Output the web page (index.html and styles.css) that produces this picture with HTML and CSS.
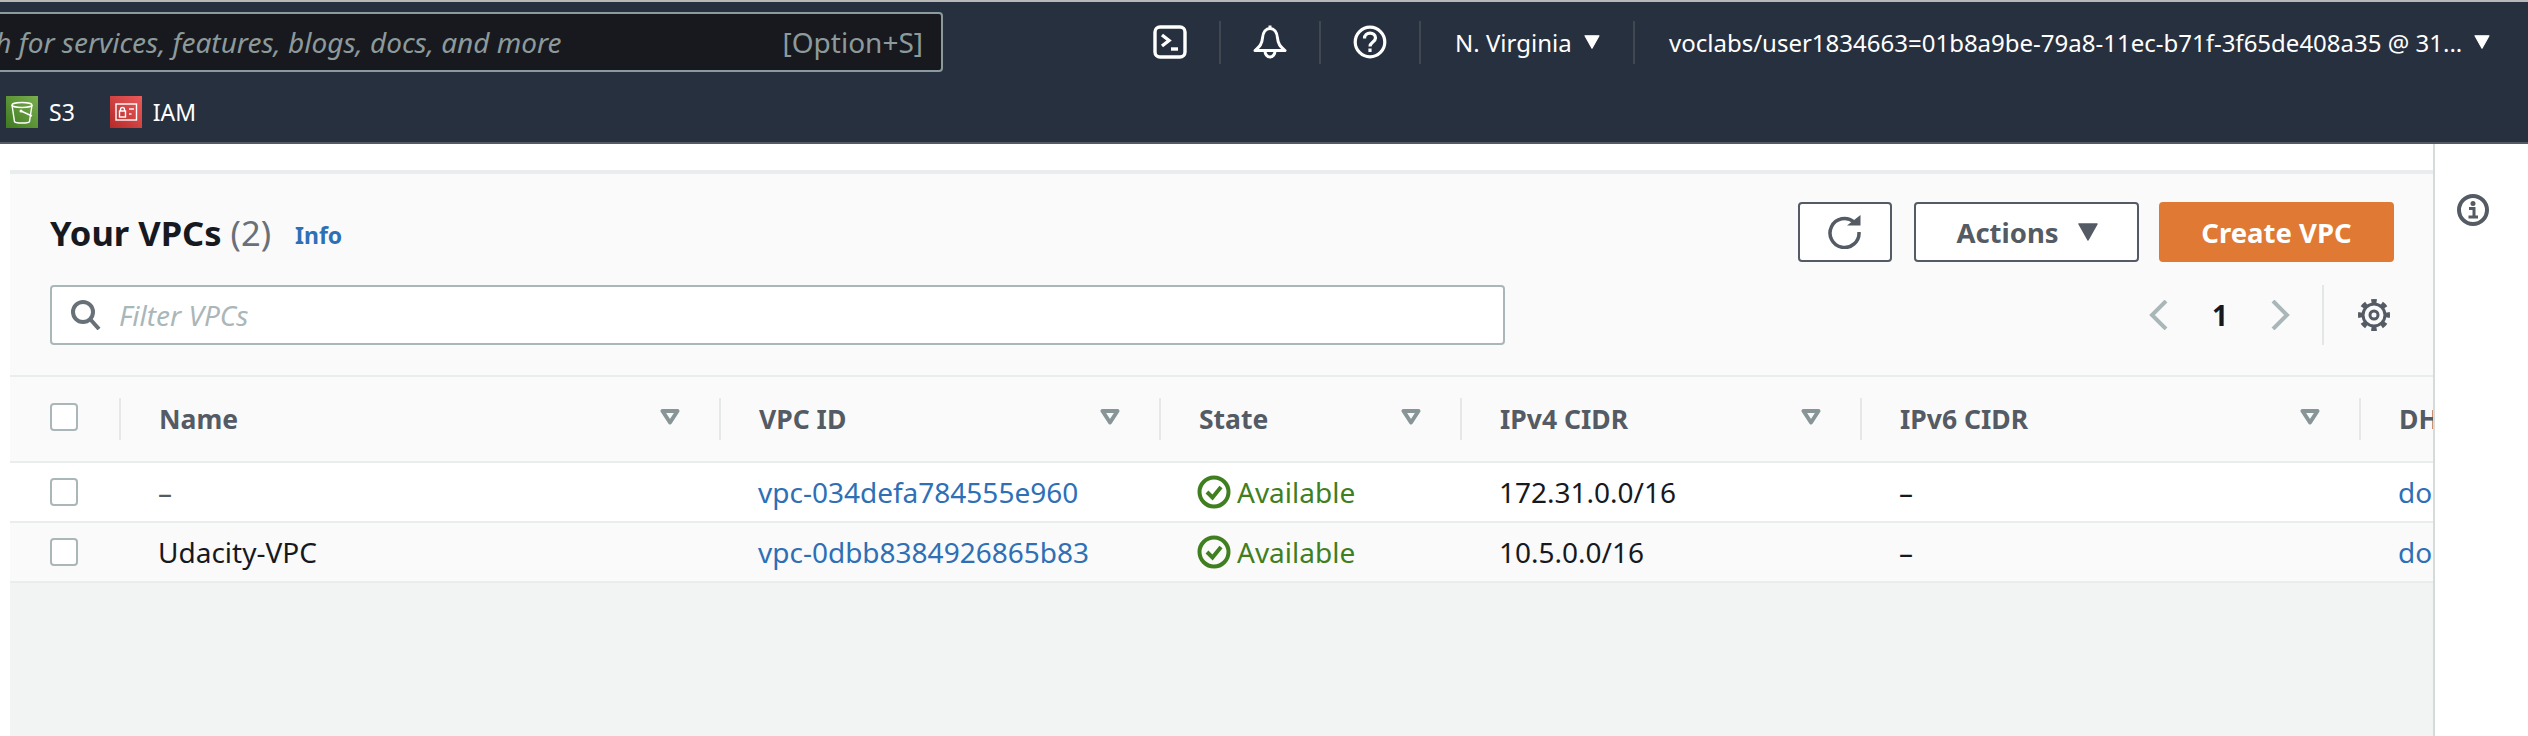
FILE: index.html
```html
<!DOCTYPE html>
<html lang="en">
<head>
    <meta charset="UTF-8">
    <meta name="viewport" content="width=device-width, initial-scale=1.0">
    <title>VPC Management Console</title>
    <link rel="stylesheet" href="styles.css">
</head>
<body>

    <svg class="defs" width="0" height="0">
        <symbol id="filterIcon" viewBox="0 0 20 16">
            <polygon points="2.500,2 17.500,2 10,13.500" fill="none" stroke="#879596" stroke-width="4" stroke-linejoin="round"/>
        </symbol>
        <symbol id="statusOk" viewBox="0 0 34 34">
            <circle cx="17" cy="17" r="14.500" fill="none" stroke="#3f7f1f" stroke-width="4"/>
            <polyline points="10,17 15.500,22.500 24,12" fill="none" stroke="#3f7f1f" stroke-width="4"/>
        </symbol>
        <symbol id="caret" viewBox="0 0 20 18">
            <polygon points="1,1 19,1 10,17" fill="currentColor" stroke="currentColor" stroke-width="1.500" stroke-linejoin="round"/>
        </symbol>
    </svg>

    <header class="topnav">
        <div class="nav-main">
            <div class="nav-search">
                <span class="nav-search-text">Search for services, features, blogs, docs, and more</span>
                <span class="nav-search-key">[Option+S]</span>
            </div>
            <div class="nav-tools">
                <div class="nav-tool">
                    <svg width="34" height="34" viewBox="0 0 34 34" fill="none" stroke="#fff" stroke-width="3.400">
                        <rect x="2" y="2" width="30" height="30" rx="5"/>
                        <polyline points="9,10 16,15.500 9,21"/>
                        <line x1="18" y1="24" x2="25" y2="24"/>
                    </svg>
                </div>
                <div class="nav-tool">
                    <svg width="34" height="34" viewBox="0 0 34 34" fill="none" stroke="#fff" stroke-width="3" stroke-linejoin="round">
                        <path d="M2 25.500 C7 21 9 19 9.500 13 C10 7 13 3.500 17 3.500 C21 3.500 24 7 24.500 13 C25 19 27 21 32 25.500 Z"/>
                        <path d="M12 26 a5 6 0 0 0 10 0"/>
                        <line x1="17" y1="0.500" x2="17" y2="4"/>
                    </svg>
                </div>
                <div class="nav-tool">
                    <svg width="34" height="34" viewBox="0 0 34 34" fill="none" stroke="#fff" stroke-width="3.200">
                        <circle cx="17" cy="17" r="14.800"/>
                        <path d="M11.500 13.500 C11.500 6.500 22.500 6.500 22.500 13 C22.500 17 17 17 17 21.500"/>
                        <line x1="17" y1="23.500" x2="17" y2="27"/>
                    </svg>
                </div>
                <div class="nav-menu">
                    <span>N. Virginia</span>
                    <svg class="nav-caret" width="16" height="14"><use href="#caret"/></svg>
                </div>
                <div class="nav-menu nav-account">
                    <span>voclabs/user1834663=01b8a9be-79a8-11ec-b71f-3f65de408a35 @ 31...</span>
                    <svg class="nav-caret" width="16" height="14"><use href="#caret"/></svg>
                </div>
            </div>
        </div>
        <div class="nav-favorites">
            <div class="fav">
                <svg class="fav-icon" width="32" height="32" viewBox="0 0 32 32">
                    <defs>
                        <linearGradient id="s3Bg" x1="0" y1="1" x2="1" y2="0">
                            <stop offset="0" stop-color="#3f7a20"/>
                            <stop offset="1" stop-color="#7aae4e"/>
                        </linearGradient>
                    </defs>
                    <rect width="32" height="32" fill="url(#s3Bg)"/>
                    <g fill="none" stroke="#fff" stroke-width="1.400">
                        <ellipse cx="16" cy="9" rx="10" ry="2.500"/>
                        <path d="M6 9 L8.500 25.500 C9 27.500 23 27.500 23.500 25.500 L26 9"/>
                        <path d="M15 15 L26 20"/>
                    </g>
                    <circle cx="15" cy="15" r="1.500" fill="#fff"/>
                </svg>
                <span>S3</span>
            </div>
            <div class="fav">
                <svg class="fav-icon" width="32" height="32" viewBox="0 0 32 32">
                    <defs>
                        <linearGradient id="iamBg" x1="0" y1="1" x2="1" y2="0">
                            <stop offset="0" stop-color="#b52a2a"/>
                            <stop offset="1" stop-color="#ec5a5a"/>
                        </linearGradient>
                    </defs>
                    <rect width="32" height="32" fill="url(#iamBg)"/>
                    <g fill="none" stroke="#fff" stroke-width="1.400">
                        <rect x="6" y="8" width="20.500" height="16"/>
                        <rect x="9.500" y="15" width="6" height="6"/>
                        <path d="M10.500 15 v-1.500 a2 2 0 0 1 4 0 v1.500"/>
                        <line x1="19" y1="13" x2="24" y2="13"/>
                        <line x1="19" y1="18" x2="21.500" y2="18"/>
                    </g>
                </svg>
                <span>IAM</span>
            </div>
        </div>
    </header>

    <main class="content">
        <section class="panel">
            <div class="panel-head">
                <div class="head-row">
                    <h1 class="title">Your VPCs <span class="count">(2)</span></h1>
                    <a class="info-link">Info</a>
                    <div class="actions">
                        <button class="btn btn-icon">
                            <svg width="36" height="34" viewBox="0 0 36 34" fill="none" stroke="#545b64" stroke-width="3.500">
                                <path d="M27 7 A14.500 14.500 0 1 0 32 17"/>
                                <path d="M20 10.500 H33.500 V0 Z" fill="#545b64" stroke="none"/>
                            </svg>
                        </button>
                        <button class="btn btn-actions">
                            Actions
                            <svg width="20" height="18"><use href="#caret"/></svg>
                        </button>
                        <button class="btn btn-primary">Create VPC</button>
                    </div>
                </div>
                <div class="head-row filter-row">
                    <div class="filter">
                        <svg width="30" height="30" viewBox="0 0 30 30" fill="none" stroke="#687078" stroke-width="4">
                            <circle cx="12" cy="12" r="10"/>
                            <line x1="19" y1="19" x2="28" y2="29"/>
                        </svg>
                        <span>Filter VPCs</span>
                    </div>
                    <div class="pager">
                        <svg width="19" height="30" viewBox="0 0 19 30" fill="none" stroke="#aab7b8" stroke-width="4"><polyline points="17,1 3,15 17,29"/></svg>
                        <span class="page-num">1</span>
                        <svg width="19" height="30" viewBox="0 0 19 30" fill="none" stroke="#aab7b8" stroke-width="4"><polyline points="2,1 16,15 2,29"/></svg>
                        <div class="pager-sep"></div>
                        <svg class="gear" width="32" height="32" viewBox="0 0 32 32" fill="none" stroke="#545b64">
                            <circle cx="16" cy="16" r="11" stroke-width="3"/>
                            <circle cx="16" cy="16" r="13.500" stroke-width="5" pathLength="80" stroke-dasharray="5 5" stroke-dashoffset="2.500"/>
                            <circle cx="16" cy="16" r="4" stroke-width="3"/>
                        </svg>
                    </div>
                </div>
            </div>

            <div class="table-row table-head">
                <div class="cell-check"><span class="checkbox"></span></div>
                <div class="th"><span>Name</span><svg width="20" height="16"><use href="#filterIcon"/></svg></div>
                <div class="th"><span>VPC ID</span><svg width="20" height="16"><use href="#filterIcon"/></svg></div>
                <div class="th"><span>State</span><svg width="20" height="16"><use href="#filterIcon"/></svg></div>
                <div class="th"><span>IPv4 CIDR</span><svg width="20" height="16"><use href="#filterIcon"/></svg></div>
                <div class="th"><span>IPv6 CIDR</span><svg width="20" height="16"><use href="#filterIcon"/></svg></div>
                <div class="th"><span>DHCP</span></div>
            </div>
            <div class="table-row row-white">
                <div class="cell-check"><span class="checkbox"></span></div>
                <div class="td muted">–</div>
                <div class="td"><a>vpc-034defa784555e960</a></div>
                <div class="td status"><svg width="34" height="34"><use href="#statusOk"/></svg>Available</div>
                <div class="td">172.31.0.0/16</div>
                <div class="td">–</div>
                <div class="td"><a>dopt-0a1b</a></div>
            </div>
            <div class="table-row">
                <div class="cell-check"><span class="checkbox"></span></div>
                <div class="td">Udacity-VPC</div>
                <div class="td"><a>vpc-0dbb8384926865b83</a></div>
                <div class="td status"><svg width="34" height="34"><use href="#statusOk"/></svg>Available</div>
                <div class="td">10.5.0.0/16</div>
                <div class="td">–</div>
                <div class="td"><a>dopt-0a1b</a></div>
            </div>
        </section>

        <aside class="side">
            <svg width="32" height="32" viewBox="0 0 32 32" fill="none" stroke="#545b64" stroke-width="4">
                <circle cx="16" cy="16" r="14"/>
                <circle cx="16" cy="9.500" r="2.500" fill="#545b64" stroke="none"/>
                <path d="M12 14.500 h5 v8 M11.500 23 h9.500" stroke-width="3"/>
            </svg>
        </aside>
    </main>

</body>
</html>
```

FILE: styles.css
```css
* {
    box-sizing: border-box;
}

html, body {
    height: 100%;
}

body {
    margin: 0;
    display: flex;
    flex-direction: column;
    overflow: hidden;
    font-family: "Noto Sans", sans-serif;
    font-size: 28px;
    color: #16191f;
    background-color: #fff;
}

.defs {
    position: absolute;
}

/* top nav */
.topnav {
    height: 144px;
    flex-shrink: 0;
    background-color: #27303f;
    border-top: 2px solid #b8b8b8;
    border-bottom: 2px solid #545b64;
    padding-top: 10px;
    color: #fff;
    overflow: hidden;
}

.nav-main {
    display: flex;
    align-items: center;
    height: 60px;
}

.nav-search {
    display: flex;
    justify-content: space-between;
    align-items: center;
    flex-shrink: 0;
    width: 1043px;
    height: 60px;
    margin-left: -100px;
    padding: 0 18px 0 26px;
    background-color: #17191e;
    border: 2px solid #8b9a9c;
    border-radius: 4px;
    color: #8d9a9c;
    font-size: 28px;
}

.nav-search-text {
    font-style: italic;
}

.nav-tools {
    display: flex;
    align-items: center;
    margin-left: 178px;
    font-size: 24px;
}

.nav-tool {
    display: flex;
    justify-content: center;
    align-items: center;
    width: 100px;
    height: 43px;
    border-right: 2px solid #414750;
}

.nav-menu {
    display: flex;
    align-items: center;
    flex-shrink: 0;
    width: 214px;
    height: 43px;
    padding-left: 34px;
    border-right: 2px solid #414750;
}

.nav-account {
    width: 880px;
    border-right: none;
}

.nav-caret {
    margin-left: 12px;
}

.nav-favorites {
    display: flex;
    margin-top: 24px;
    padding-left: 6px;
    gap: 35px;
}

.fav {
    display: flex;
    align-items: center;
    gap: 11px;
    height: 32px;
    font-size: 23px;
    line-height: 30px;
}

/* content */
.content {
    flex: 1;
    display: flex;
    min-height: 0;
    padding-left: 10px;
}

.panel {
    width: 2423px;
    margin-top: 26px;
    background-color: #f2f3f3;
    overflow: hidden;
}

.panel-head {
    height: 207px;
    padding: 28px 39px 0 40px;
    background-color: #fafafa;
    border-top: 4px solid #eaeded;
    border-bottom: 2px solid #eaeded;
}

.head-row {
    display: flex;
    align-items: center;
}

.filter-row {
    margin-top: 23px;
}

.title {
    margin: 0;
    font-size: 34.500px;
    font-weight: 700;
}

.count {
    font-weight: 400;
    color: #687078;
}

.info-link {
    margin: 6px 0 0 24px;
    font-size: 23px;
    font-weight: 700;
    color: #2e6fb6;
}

.actions {
    display: flex;
    gap: 22px;
    margin-left: auto;
}

.btn {
    display: flex;
    justify-content: center;
    align-items: center;
    height: 60px;
    font-family: inherit;
    font-size: 27.500px;
    font-weight: 700;
    color: #545b64;
    background-color: #fff;
    border: 2px solid #545b64;
    border-radius: 4px;
}

.btn-icon {
    width: 94px;
}

.btn-actions {
    width: 225px;
    padding-left: 7px;
    gap: 19px;
}

.btn-primary {
    width: 235px;
    margin-left: -2px;
    color: #fff;
    background-color: #e07933;
    border-color: #e07933;
}

.filter {
    display: flex;
    align-items: center;
    gap: 18px;
    width: 1455px;
    height: 60px;
    padding-left: 19px;
    background-color: #fff;
    border: 2px solid #aab7b8;
    border-radius: 4px;
    font-style: italic;
    color: #aab7b8;
}

.pager {
    display: flex;
    align-items: center;
    margin-left: auto;
    margin-right: 4px;
}

.page-num {
    margin: 0 43px 0 44px;
    font-weight: 700;
}

.pager-sep {
    width: 2px;
    height: 60px;
    margin: 0 34px 0 32px;
    background-color: #e4e7e7;
}

/* table */
.table-row {
    display: grid;
    grid-template-columns: 109px 600px 440px 301px 400px 499px 1fr;
    align-items: center;
    height: 60px;
    background-color: #fafafa;
    border-bottom: 2px solid #eaeded;
}

.row-white {
    background-color: #fff;
}

.table-head {
    height: 86px;
    font-size: 26.500px;
    font-weight: 700;
    color: #545b64;
}

.cell-check {
    display: flex;
    padding-left: 40px;
}

.table-head .cell-check {
    margin-bottom: 4px;
}

.checkbox {
    width: 28px;
    height: 28px;
    background-color: #fff;
    border: 2px solid #aab7b8;
    border-radius: 4px;
}

.th {
    display: flex;
    justify-content: space-between;
    align-items: center;
    height: 42px;
    padding: 0 39px 0 38px;
    border-left: 2px solid #e6e8e8;
}

.th svg {
    margin-bottom: 4px;
}

.td {
    padding-left: 39px;
    white-space: nowrap;
}

.td a {
    color: #2e6fb6;
}

.muted {
    color: #545b64;
}

.status {
    display: flex;
    align-items: center;
    gap: 6px;
    padding-left: 38px;
    color: #3f7f1f;
}

.side {
    flex: 1;
    padding: 50px 0 0 22px;
    border-left: 2px solid #d5dbdb;
}
```
